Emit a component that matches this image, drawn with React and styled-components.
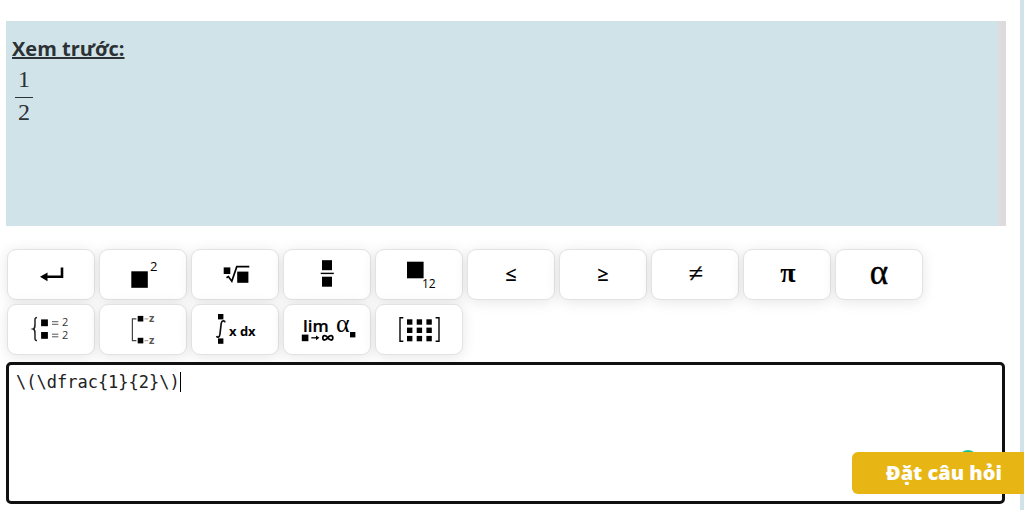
import React, { useState } from 'react';
import styled, { createGlobalStyle } from 'styled-components';

const colors = {
  panel: '#d0e3e9',
  scrollbar: '#dddbdc',
  text: '#2c3134',
  line: '#e2e2e2',
  accent: '#e7b614',
  badge: '#15c39a',
};

const sans = "'Open Sans', 'Noto Sans', sans-serif";
const serif = "'Liberation Serif', 'Times New Roman', serif";

const GlobalStyle = createGlobalStyle`
  * {
    box-sizing: border-box;
  }
  body {
    margin: 0;
    background: #fff;
    color: ${colors.text};
    font-family: ${sans};
  }
`;

const Square = ({ x, y, size }) => <rect x={x} y={y} width={size} height={size} />;

const Glyph = styled.text`
  fill: ${({ $color }) => $color || '#000'};
  stroke: ${({ $color }) => $color || '#000'};
  stroke-width: ${({ $outline }) => $outline || 0};
  font-family: ${({ $family }) => $family || sans};
  font-size: ${({ $size }) => $size}px;
  font-weight: ${({ $weight }) => $weight || 400};
`;

const keys = [
  {
    label: 'Xuống dòng',
    icon: (
      <>
        <path d='M36 26.8H53V17.5' fill='none' stroke='#000' strokeWidth='2.6' />
        <path d='M31 26.8L38.5 22.4V31.2Z' />
      </>
    ),
  },
  {
    label: 'Lũy thừa',
    icon: (
      <>
        <Square x={30.3} y={21.3} size={16.5} />
        <Glyph x='49' y='21' $size={13}>2</Glyph>
      </>
    ),
  },
  {
    label: 'Căn thức',
    icon: (
      <>
        <Square x={30.7} y={17.4} size={6.6} />
        <path d='M33.5 27.8L35.4 26.6L38.8 31.2L43.8 16.6H56.3' fill='none' stroke='#000' strokeWidth='1.7' />
        <Square x={44.2} y={21.6} size={11.2} />
      </>
    ),
  },
  {
    label: 'Phân số',
    icon: (
      <>
        <Square x={37} y={10.2} size={10} />
        <path d='M35.7 23.4H48.8' stroke='#000' strokeWidth='1.4' />
        <Square x={37} y={26.7} size={10} />
      </>
    ),
  },
  {
    label: 'Chỉ số dưới',
    icon: (
      <>
        <Square x={30} y={11.7} size={16.6} />
        <Glyph x='45' y='38' $size={12}>12</Glyph>
      </>
    ),
  },
  { label: 'Nhỏ hơn hoặc bằng', icon: <Glyph x='42' y='31' $size={20} $weight={600} textAnchor='middle'>≤</Glyph> },
  { label: 'Lớn hơn hoặc bằng', icon: <Glyph x='42' y='31' $size={20} $weight={600} textAnchor='middle'>≥</Glyph> },
  { label: 'Khác', icon: <Glyph x='43' y='32' $size={26} $family={serif} $outline={0.3} textAnchor='middle'>≠</Glyph> },
  { label: 'Pi', icon: <Glyph x='43' y='32' $size={28} $weight={700} $family={serif} textAnchor='middle'>π</Glyph> },
  { label: 'Alpha', icon: <Glyph x='42' y='34' $size={35} $family={serif} $outline={0.4} textAnchor='middle'>α</Glyph> },
  {
    label: 'Hệ phương trình',
    icon: (
      <>
        <path d='M28 12.5C25.5 12.5 26 14.5 26 18C26 22 26 23.5 24.2 24C26 24.5 26 26 26 30C26 33.5 25.5 35.6 28 35.6' fill='none' stroke='#222' strokeWidth='1.5' />
        <Square x={32.1} y={14.4} size={6.8} />
        <Square x={32.1} y={27} size={6.8} />
        <path d='M43 16.7H49.3M43 19.3H49.3M43 29.2H49.3M43 31.8H49.3' stroke='#555' strokeWidth='1' />
        <Glyph x='53' y='21' $size={11} $color='#333'>2</Glyph>
        <Glyph x='53' y='34' $size={11} $color='#333'>2</Glyph>
      </>
    ),
  },
  {
    label: 'Tuyển phương trình',
    icon: (
      <>
        <path d='M35.4 13.8H31.4V35.6H35.4' fill='none' stroke='#444' strokeWidth='1.2' />
        <Square x={36.7} y={10.9} size={5.6} />
        <Square x={36.7} y={32.8} size={5.6} />
        <path d='M43.4 13.8H47.3M43.4 35.6H47.3' stroke='#aaa' strokeWidth='1.2' />
        <Glyph x='48' y='17' $size={11} $weight={700} $color='#555'>z</Glyph>
        <Glyph x='48' y='39' $size={11} $weight={700} $color='#555'>z</Glyph>
      </>
    ),
  },
  {
    label: 'Tích phân',
    icon: (
      <>
        <Square x={25} y={9} size={5.4} />
        <path d='M32 17.4C31.6 15.4 28.6 15.2 28.2 18.5L26.9 29.5C26.5 32.8 24.2 32.8 23.7 31' fill='none' stroke='#111' strokeWidth='1.7' />
        <Square x={25} y={33.4} size={5.4} />
        <Glyph x='36' y='31' $size={13} $weight={700}>x dx</Glyph>
      </>
    ),
  },
  {
    label: 'Giới hạn',
    icon: (
      <>
        <Glyph x='18' y='27' $size={17} $weight={600} $outline={0.2}>lim</Glyph>
        <Square x={16.8} y={29.6} size={6.6} />
        <path d='M26.3 32.8H32' stroke='#000' strokeWidth='1.3' />
        <path d='M31 30.4L34.4 32.8L31 35.2Z' />
        <path d='M42.8 32.8C41.2 30.4 37.8 29.4 37.8 32.8C37.8 36.2 41.2 35.2 42.8 32.8C44.4 30.4 47.8 29.4 47.8 32.8C47.8 36.2 44.4 35.2 42.8 32.8Z' fill='none' stroke='#000' strokeWidth='1.8' />
        <Glyph x='51' y='27' $size={26} $family={serif}>α</Glyph>
        <Square x={65} y={27} size={5.4} />
      </>
    ),
  },
  {
    label: 'Ma trận',
    icon: (
      <>
        <path d='M26.3 12.8H23V36.2H26.3M58.6 12.8H62V36.2H58.6' fill='none' stroke='#000' strokeWidth='1.4' />
        {[14.3, 22.6, 30.9].map((y) =>
          [30, 39.7, 49.4].map((x) => <Square key={`${x}-${y}`} x={x} y={y} size={5.4} />)
        )}
      </>
    ),
  },
];

const App = () => {
  const [formula, setFormula] = useState('\\(\\dfrac{1}{2}\\)');
  const [caret, setCaret] = useState(formula.length);

  return (
    <Page>
      <GlobalStyle />
      <Editor>
        <Preview>
          <PreviewTitle>Xem trước:</PreviewTitle>
          <Fraction>
            <Numerator>1</Numerator>
            <Denominator>2</Denominator>
          </Fraction>
        </Preview>
        <Keypad>
          {keys.map(({ label, icon }) => (
            <Key key={label} type='button' aria-label={label}>
              <KeyIcon viewBox='-1 0 86 49' aria-hidden='true'>{ icon }</KeyIcon>
            </Key>
          ))}
        </Keypad>
        <InputWrapper>
          <FormulaInput
            aria-label='Công thức'
            spellCheck={false}
            value={formula}
            onChange={(e) => setFormula(e.target.value)}
            onSelect={(e) => setCaret(e.target.selectionStart)}
          />
          <Caret style={{ left: `calc(10px + ${caret}ch)` }} />
          <Badge />
        </InputWrapper>
      </Editor>
      <AskButton type='button'>Đặt câu hỏi</AskButton>
    </Page>
  );
}

const Page = styled.div`
  min-height: 100vh;
  border-right: 4px solid ${colors.panel};
`;

const Editor = styled.main`
  display: flex;
  flex-direction: column;
  padding: 21px 14px 6px 6px;
`;

const Preview = styled.section`
  min-height: 205px;
  padding: 15px 6px;
  background: ${colors.panel};
  border-right: 8px solid ${colors.scrollbar};
`;

const PreviewTitle = styled.h2`
  margin: 0;
  font-size: 20px;
  line-height: 25px;
  font-weight: 700;
  text-decoration: underline;
`;

const Fraction = styled.div`
  display: inline-flex;
  flex-direction: column;
  margin: 4px 3px;
  font-family: ${serif};
  font-size: 24px;
  line-height: 28px;
  text-align: center;
`;

const Numerator = styled.span`
  padding: 0 3px 4px;
  border-bottom: 1px solid ${colors.text};
`;

const Denominator = styled.span`
  padding: 0 3px;
`;

const Keypad = styled.div`
  display: flex;
  flex-wrap: wrap;
  gap: 4px;
  max-width: 960px;
  padding: 23px 1px 7px;
`;

const Key = styled.button`
  display: flex;
  width: 88px;
  height: 51px;
  padding: 0;
  background: #fff;
  border: 1px solid ${colors.line};
  border-radius: 9px;
  box-shadow: 0 2px 14px rgba(0, 0, 0, 0.1);
  cursor: pointer;
`;

const KeyIcon = styled.svg`
  display: block;
  width: 86px;
  height: 49px;
`;

const InputWrapper = styled.div`
  position: relative;
  display: flex;
  margin-right: 1px;
  font-family: 'DejaVu Sans Mono', 'Liberation Mono', monospace;
  font-size: 17px;
  line-height: 20px;
`;

const FormulaInput = styled.textarea`
  flex: 1;
  height: 142px;
  padding: 7px;
  border: 3px solid #101010;
  border-radius: 5px;
  outline: none;
  resize: none;
  color: #222;
  caret-color: transparent;
  font: inherit;
`;

const Caret = styled.span`
  position: absolute;
  top: 10px;
  width: 1px;
  height: 20px;
  background: #000;
  pointer-events: none;
`;

const Badge = styled.span`
  position: absolute;
  right: 27px;
  bottom: 34px;
  width: 20px;
  height: 20px;
  border-radius: 50%;
  background: ${colors.badge};
`;

const AskButton = styled.button`
  position: fixed;
  right: 0;
  bottom: 16px;
  padding: 0 22px 0 34px;
  border: 0;
  border-radius: 6px 0 0 6px;
  background: ${colors.accent};
  color: #fff;
  font-family: ${sans};
  font-size: 20px;
  line-height: 42px;
  font-weight: 800;
  cursor: pointer;
`;

export default App;
